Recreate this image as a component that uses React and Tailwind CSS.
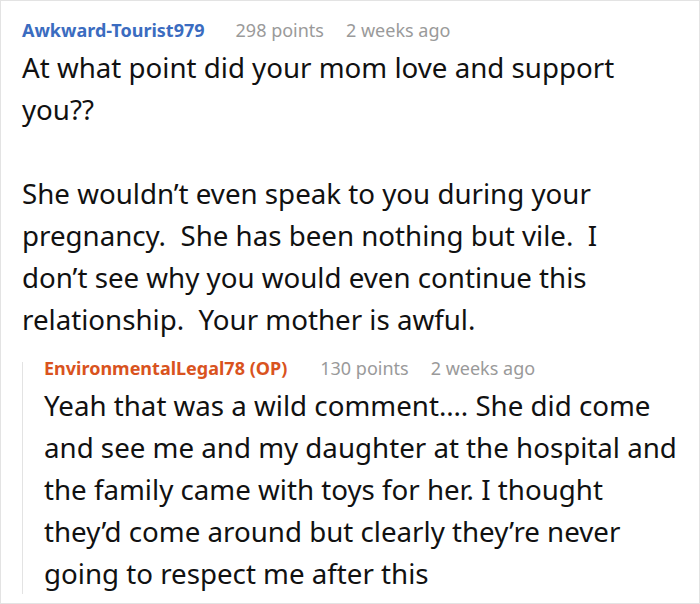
export default function App() {
  return (
    <div className="w-[700px] h-[604px] bg-white border border-[#e3e3e3] overflow-hidden" style={{ fontFamily: '"Noto Sans", sans-serif' }}>
      <div className="pl-[21px] pt-[23px]">
        <div className="flex items-baseline text-[18px] leading-[12px]">
          <span className="font-bold text-[#3b6cc0]">Awkward-Tourist979</span>
          <span className="ml-[31px] text-[#9a9a9a]">298 points</span>
          <span className="ml-[22px] text-[#9a9a9a]">2 weeks ago</span>
        </div>
        <div className="w-[634px] text-[27.7px] leading-[42px] text-[#111] mt-[10px]">
          <p>At what point did your mom love and support you??</p>
          <p className="mt-[42px]">She wouldn’t even speak to you during your pregnancy.&nbsp; She has been nothing but vile.&nbsp; I don’t see why you would even continue this relationship.&nbsp; Your mother is awful.</p>
        </div>
        <div className="mt-[28px] border-l border-[#e3e3e3] pl-[21px]">
          <div className="-mt-[6px] -mb-[9px]">
            <div className="flex items-baseline text-[18px] leading-[12px]">
              <span className="font-bold text-[#d9531e]">EnvironmentalLegal78 (OP)</span>
              <span className="ml-[33px] text-[#9a9a9a]">130 points</span>
              <span className="ml-[22px] text-[#9a9a9a]">2 weeks ago</span>
            </div>
            <p className="w-[636px] mt-[10px] text-[27.7px] leading-[42px] text-[#111]">Yeah that was a wild comment…. She did come and see me and my daughter at the hospital and the family came with toys for her. I thought they’d come around but clearly they’re never going to respect me after this</p>
          </div>
        </div>
      </div>
    </div>
  );
}
